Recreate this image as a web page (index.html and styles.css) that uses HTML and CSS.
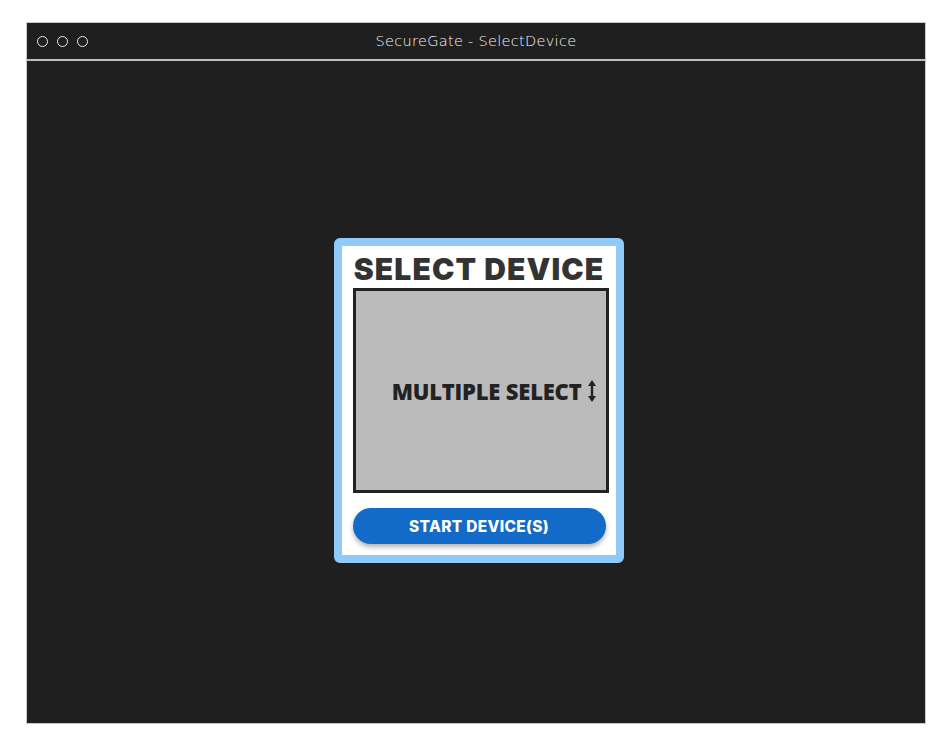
FILE: index.html
```html
<!DOCTYPE html>
<html>
<head>
<meta charset="utf-8">
<link rel="stylesheet" href="styles.css">
</head>
<body>
<div class="window">
  <div class="titlebar">
    <div class="dots">
      <span class="dot"></span><span class="dot"></span><span class="dot"></span>
    </div>
    <div class="title">SecureGate - SelectDevice</div>
  </div>
  <div class="content">
    <div class="card">
      <h1 class="heading">SELECT DEVICE</h1>
      <div class="listbox">
        <span class="listlabel">MULTIPLE SELECT</span>
        <svg class="arrow" width="10" height="24" viewBox="0 0 10 24">
          <path d="M5 3 L5 21" stroke="#222" stroke-width="2.4"/>
          <path d="M1 7 L5 1 L9 7 Z" fill="#222"/>
          <path d="M1 17 L5 23 L9 17 Z" fill="#222"/>
        </svg>
      </div>
      <button class="start">START DEVICE(S)</button>
    </div>
  </div>
</div>
</body>
</html>
```
FILE: styles.css
```css
html, body {
  margin: 0;
  padding: 0;
  background: #ffffff;
}
body {
  padding: 22px 0 0 26px;
  font-family: "DejaVu Sans", sans-serif;
}
.window {
  width: 898px;
  height: 700px;
  border: 1px solid #c8c8c8;
  background: #1f1f1f;
  display: flex;
  flex-direction: column;
}
.titlebar {
  height: 36px;
  border-bottom: 2px solid #bdbdbd;
  position: relative;
  display: flex;
  align-items: center;
}
.dots {
  display: flex;
  gap: 9px;
  padding-left: 10px;
}
.dot {
  width: 9px;
  height: 9px;
  border: 1.5px solid #e8e8e8;
  border-radius: 50%;
}
.title {
  position: absolute;
  left: 0;
  right: 0;
  text-align: center;
  color: #f4f4f4;
  font-size: 14.5px;
  font-family: "DejaVu Sans", sans-serif;
  font-weight: 300;
  letter-spacing: 0.3px;
}
.content {
  flex: 1;
  display: flex;
  justify-content: center;
  align-items: flex-start;
  padding-top: 177px;
}
.card {
  margin-left: 6px;
  width: 274px;
  border: 8px solid #90caf9;
  border-radius: 6px;
  background: #ffffff;
  display: flex;
  flex-direction: column;
  align-items: center;
}
.heading {
  margin: 4px 0 0 0;
  font-family: "Inter", "DejaVu Sans", sans-serif;
  font-weight: 900;
  font-size: 30px;
  line-height: 38px;
  color: #333333;
  letter-spacing: 1.1px;
  white-space: nowrap;
}
.listbox {
  width: 241px;
  height: 199px;
  border: 3px solid #222222;
  background: #bbbbbb;
  display: flex;
  align-items: center;
  justify-content: flex-end;
  gap: 5px;
  padding-right: 9px;
  margin-left: 3px;
}
.listlabel {
  font-family: "Open Sans", sans-serif;
  font-weight: 800;
  font-size: 22px;
  color: #222222;
  letter-spacing: -0.2px;
}
.arrow {
  display: block;
}
.start {
  margin: 15px 0 11px 0;
  width: 253px;
  height: 36px;
  border: none;
  border-radius: 18px;
  background: #126bc9;
  color: #ffffff;
  font-family: "Inter", "DejaVu Sans", sans-serif;
  font-weight: 800;
  font-size: 15.5px;
  letter-spacing: 0.3px;
  box-shadow: 0 3px 5px rgba(0,0,0,0.3);
  padding: 0;
}
```
